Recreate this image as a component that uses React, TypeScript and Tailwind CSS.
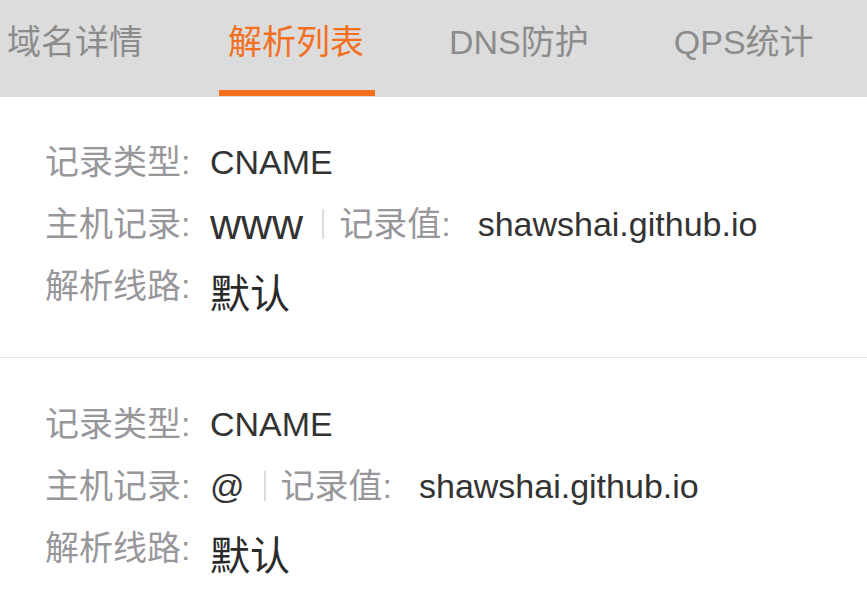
import * as React from "react"

const tabs = ["域名详情", "解析列表", "DNS防护", "QPS统计"]
const activeTab = "解析列表"

interface DnsRecord {
  type: string
  host: string
  value: string
  line: string
}

const records: DnsRecord[] = [
  { type: "CNAME", host: "www", value: "shawshai.github.io", line: "默认" },
  { type: "CNAME", host: "@", value: "shawshai.github.io", line: "默认" },
]

function Label({ children }: { children: React.ReactNode }) {
  return <span className="w-[165px] shrink-0 text-[34px] text-[#97979b]">{children}</span>
}

function RecordBlock({ record, first }: { record: DnsRecord; first: boolean }) {
  return (
    <div className={first ? "pt-[34px] pb-[40px] pl-[45px] border-b border-[#e4e4e4]" : "pt-[35px] pb-[30px] pl-[45px]"}>
      <div className="flex items-center h-[62px]">
        <Label>记录类型:</Label>
        <span className="text-[34px] text-[#333333]">{record.type}</span>
      </div>
      <div className="flex items-center h-[62px]">
        <Label>主机记录:</Label>
        <span className={record.host === "www" ? "text-[43px] font-medium text-[#333333] leading-none" : "text-[34px] text-[#333333]"}>
          {record.host}
        </span>
        <span className="ml-[19px] mr-[15px] w-[2px] h-[30px] bg-[#dddddd]" />
        <span className="text-[34px] text-[#97979b]">记录值:</span>
        <span className="ml-[27px] text-[34px] text-[#333333]">{record.value}</span>
      </div>
      <div className="flex items-center h-[62px]">
        <Label>解析线路:</Label>
        <span className="mt-[16px] text-[40px] text-[#2a2a2a]">{record.line}</span>
      </div>
    </div>
  )
}

export default function App() {
  return (
    <div
      className="w-[867px] h-[611px] overflow-hidden bg-white"
      style={{ fontFamily: '"Liberation Sans", "Noto Sans CJK SC", sans-serif' }}
    >
      <div className="flex h-[97px] gap-[85px] pl-[7px] bg-[#dcdcdc]">
        {tabs.map((tab) => {
          const isActive = tab === activeTab
          return (
            <div key={tab} className="relative flex items-center pb-[12px] shrink-0">
              <span className={isActive ? "text-[34px] text-[#f2701f]" : "text-[34px] text-[#8c8c8c]"}>{tab}</span>
              {isActive && <span className="absolute -left-[9px] -right-[11px] bottom-[1px] h-[6px] bg-[#f26f1e]" />}
            </div>
          )
        })}
      </div>
      {records.map((record, i) => (
        <RecordBlock key={i} record={record} first={i === 0} />
      ))}
    </div>
  )
}
